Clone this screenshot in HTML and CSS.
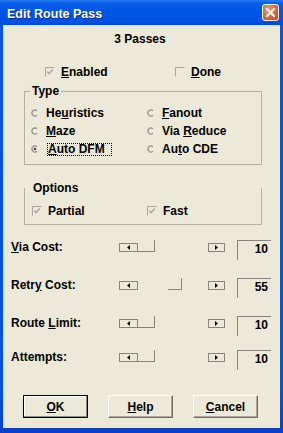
FILE: index.html
```html
<!DOCTYPE html>
<html>
<head>
<meta charset="utf-8">
<link rel="stylesheet" href="styles.css">
</head>
<body>
<div class="window">
  <div class="titlebar">
    <span class="title">Edit Route Pass</span>
    <span class="close"><svg width="11" height="11" viewBox="0 0 11 11"><path d="M2 2 L9 9 M9 2 L2 9" stroke="#fff" stroke-width="2.2" stroke-linecap="square"/></svg></span>
  </div>
  <div class="client">
    <div class="heading">3 Passes</div>
    <div class="toprow">
      <label class="chk c-first"><svg class="cbox" width="10" height="10" viewBox="0 0 10 10"><path d="M0.5 9.5 V0.5 H9.5" fill="none" stroke="#a7a6a0"/><path d="M2.2 4.6 L4 6.6 L7.8 2.6" fill="none" stroke="#a7a6a0" stroke-width="1.4"/></svg><span><u>E</u>nabled</span></label>
      <label class="chk"><svg class="cbox" width="10" height="10" viewBox="0 0 10 10"><path d="M0.5 9.5 V0.5 H9.5" fill="none" stroke="#a7a6a0"/></svg><span><u>D</u>one</span></label>
    </div>

    <div class="group g-type">
      <span class="glabel">Type</span>
      <div class="radios">
        <div class="radio"><svg class="rglyph" width="12" height="12" viewBox="0 0 12 12"><path d="M7.9 3.7 A3 3 0 1 0 7.9 8.3" fill="none" stroke="#8f8e88" stroke-width="1.2"/></svg><span>He<u>u</u>ristics</span></div>
        <div class="radio"><svg class="rglyph" width="12" height="12" viewBox="0 0 12 12"><path d="M7.9 3.7 A3 3 0 1 0 7.9 8.3" fill="none" stroke="#8f8e88" stroke-width="1.2"/></svg><span><u>F</u>anout</span></div>
        <div class="radio"><svg class="rglyph" width="12" height="12" viewBox="0 0 12 12"><path d="M7.9 3.7 A3 3 0 1 0 7.9 8.3" fill="none" stroke="#8f8e88" stroke-width="1.2"/></svg><span><u>M</u>aze</span></div>
        <div class="radio"><svg class="rglyph" width="12" height="12" viewBox="0 0 12 12"><path d="M7.9 3.7 A3 3 0 1 0 7.9 8.3" fill="none" stroke="#8f8e88" stroke-width="1.2"/></svg><span>Via <u>R</u>educe</span></div>
        <div class="radio"><svg class="rglyph" width="12" height="12" viewBox="0 0 12 12"><path d="M7.9 3.7 A3 3 0 1 0 7.9 8.3" fill="none" stroke="#8f8e88" stroke-width="1.2"/><circle cx="6" cy="6" r="1.3" fill="#4a4a48"/></svg><span class="focus"><u>A</u>uto DFM</span></div>
        <div class="radio"><svg class="rglyph" width="12" height="12" viewBox="0 0 12 12"><path d="M7.9 3.7 A3 3 0 1 0 7.9 8.3" fill="none" stroke="#8f8e88" stroke-width="1.2"/></svg><span>Au<u>t</u>o CDE</span></div>
      </div>
    </div>

    <div class="group g-options">
      <span class="glabel olabel">Options</span>
      <div class="opts">
        <label class="chk"><svg class="cbox" width="10" height="10" viewBox="0 0 10 10"><path d="M0.5 9.5 V0.5 H9.5" fill="none" stroke="#a7a6a0"/><path d="M2.2 4.6 L4 6.6 L7.8 2.6" fill="none" stroke="#a7a6a0" stroke-width="1.4"/></svg><span>Partial</span></label>
        <label class="chk"><svg class="cbox" width="10" height="10" viewBox="0 0 10 10"><path d="M0.5 9.5 V0.5 H9.5" fill="none" stroke="#a7a6a0"/><path d="M2.2 4.6 L4 6.6 L7.8 2.6" fill="none" stroke="#a7a6a0" stroke-width="1.4"/></svg><span>Fast</span></label>
      </div>
    </div>

    <div class="srow r-via">
      <span class="slabel"><u>V</u>ia Cost:</span>
      <div class="scroll">
        <span class="sbtn sleft"><svg width="3" height="5" viewBox="0 0 3 5"><polygon points="3,0 3,5 0,2.5" fill="#000"/></svg></span>
        <span class="thumb"></span>
        <span class="strack"></span>
        <span class="sbtn sright"><svg width="3" height="5" viewBox="0 0 3 5"><polygon points="0,0 0,5 3,2.5" fill="#000"/></svg></span>
      </div>
      <span class="edit">10</span>
    </div>

    <div class="srow r-retry">
      <span class="slabel">Retr<u>y</u> Cost:</span>
      <div class="scroll">
        <span class="sbtn sleft"><svg width="3" height="5" viewBox="0 0 3 5"><polygon points="3,0 3,5 0,2.5" fill="#000"/></svg></span>
        <span class="thumb" style="margin-left:30px;width:14px"></span>
        <span class="strack"></span>
        <span class="sbtn sright"><svg width="3" height="5" viewBox="0 0 3 5"><polygon points="0,0 0,5 3,2.5" fill="#000"/></svg></span>
      </div>
      <span class="edit">55</span>
    </div>

    <div class="srow r-route">
      <span class="slabel">Route <u>L</u>imit:</span>
      <div class="scroll">
        <span class="sbtn sleft"><svg width="3" height="5" viewBox="0 0 3 5"><polygon points="3,0 3,5 0,2.5" fill="#000"/></svg></span>
        <span class="thumb"></span>
        <span class="strack"></span>
        <span class="sbtn sright"><svg width="3" height="5" viewBox="0 0 3 5"><polygon points="0,0 0,5 3,2.5" fill="#000"/></svg></span>
      </div>
      <span class="edit">10</span>
    </div>

    <div class="srow r-attempts">
      <span class="slabel">Attempts:</span>
      <div class="scroll">
        <span class="sbtn sleft"><svg width="3" height="5" viewBox="0 0 3 5"><polygon points="3,0 3,5 0,2.5" fill="#000"/></svg></span>
        <span class="thumb"></span>
        <span class="strack"></span>
        <span class="sbtn sright"><svg width="3" height="5" viewBox="0 0 3 5"><polygon points="0,0 0,5 3,2.5" fill="#000"/></svg></span>
      </div>
      <span class="edit">10</span>
    </div>

    <div class="buttons">
      <span class="btn btn-default"><span><u>O</u>K</span></span>
      <span class="btn"><span><u>H</u>elp</span></span>
      <span class="btn"><span><u>C</u>ancel</span></span>
    </div>
  </div>
</div>
</body>
</html>
```

FILE: styles.css
```css
* { box-sizing: border-box; }

body {
  margin: 0;
  font-family: "Liberation Sans", Arial, sans-serif;
  font-size: 12px;
  font-weight: bold;
  color: #000;
}

.window {
  width: 283px;
  height: 433px;
  display: flex;
  flex-direction: column;
  background: linear-gradient(to bottom, #0855e6 0%, #0652e0 90%, #0a3fcb 100%);
  overflow: hidden;
}

.titlebar {
  height: 25px;
  flex: none;
  display: flex;
  align-items: center;
  justify-content: space-between;
  padding: 0 4px 0 7px;
  background: linear-gradient(to bottom, #2a7cf6 0%, #0a5ee9 12%, #0055e4 45%, #0053e2 85%, #0048d6 100%);
}

.title {
  color: #fff;
  font-size: 12.5px;
  line-height: 14px;
  margin-top: 3px;
  text-shadow: 1px 1px 0 #0a2a9a;
}

.close {
  width: 17px;
  height: 17px;
  border: 1px solid #fff;
  border-radius: 3px;
  background: radial-gradient(circle at 35% 30%, #f19a7e 0%, #e06a48 45%, #c8431f 100%);
  display: flex;
  align-items: center;
  justify-content: center;
}

.client {
  flex: 1;
  margin: 0 3px 5px 3px;
  background: #ece9d8;
  display: flex;
  flex-direction: column;
}

.heading {
  margin-top: 7px;
  line-height: 14px;
  text-align: center;
  padding-right: 3px;
}

.toprow {
  margin-top: 19px;
  display: flex;
  line-height: 14px;
  padding-left: 42px;
}

.c-first { width: 130px; }

.chk {
  display: flex;
  align-items: center;
}

.cbox {
  flex: none;
  margin-right: 6px;
}

.group {
  position: relative;
  margin-left: 21px;
  width: 238px;
  border: 1px solid #b4b1a3;
}

.glabel {
  position: absolute;
  top: -8px;
  left: 5px;
  padding: 0 2px;
  line-height: 14px;
  background: #ece9d8;
}

.g-type {
  margin-top: 12px;
  padding: 12px 0 6px 4px;
}

.radios {
  display: grid;
  grid-template-columns: 116px 1fr;
  grid-auto-rows: 18px;
}

.radio {
  display: flex;
  align-items: center;
  line-height: 18px;
}

.rglyph {
  flex: none;
  margin-right: 5px;
}

.focus {
  display: inline-block;
  width: 65px;
  line-height: 11px;
  border: 1px dotted #000;
  margin-left: 1px;
}

.g-options {
  margin-top: 23px;
  border-top: none;
  padding: 16px 0 6px 7px;
}

.olabel {
  top: -7px;
  left: 6px;
}

.opts {
  display: grid;
  grid-template-columns: 115px 1fr;
  line-height: 14px;
}

.srow {
  display: flex;
  height: 20px;
  margin-left: 8px;
  line-height: 14px;
}

.r-via { margin-top: 15px; }
.r-retry { margin-top: 18px; }
.r-route { margin-top: 18px; }
.r-attempts { margin-top: 14px; }

.slabel { width: 108px; flex: none; }

.scroll {
  width: 106px;
  height: 12px;
  flex: none;
  display: flex;
  align-items: flex-end;
}

.sbtn {
  flex: none;
  height: 9px;
  border: 1px solid #85847e;
  display: flex;
  align-items: center;
  justify-content: center;
}

.sleft { width: 19px; }
.sright { width: 17px; }

.thumb {
  flex: none;
  width: 17px;
  height: 12px;
  border-right: 1px solid #85847e;
  border-bottom: 1px solid #85847e;
}

.strack { flex: 1; }

.edit {
  flex: none;
  margin-left: 12px;
  width: 34px;
  height: 20px;
  border-top: 1px solid #85847e;
  border-left: 1px solid #85847e;
  text-align: right;
  padding: 1px 3px 0 0;
}

.buttons {
  margin-top: 25px;
  display: flex;
  gap: 20px;
  padding-left: 20px;
}

.btn {
  width: 65px;
  height: 23px;
  display: flex;
  align-items: center;
  justify-content: center;
  border-top: 1px solid #fff;
  border-left: 1px solid #fff;
  border-right: 1px solid #6f6d64;
  border-bottom: 1px solid #6f6d64;
  box-shadow: inset -1px -1px 0 #aca899;
  line-height: 14px;
}

.btn-default {
  border: 1px solid #000;
  box-shadow: inset -1px -1px 0 #8d8b82, inset 1px 1px 0 #fff;
}
```
